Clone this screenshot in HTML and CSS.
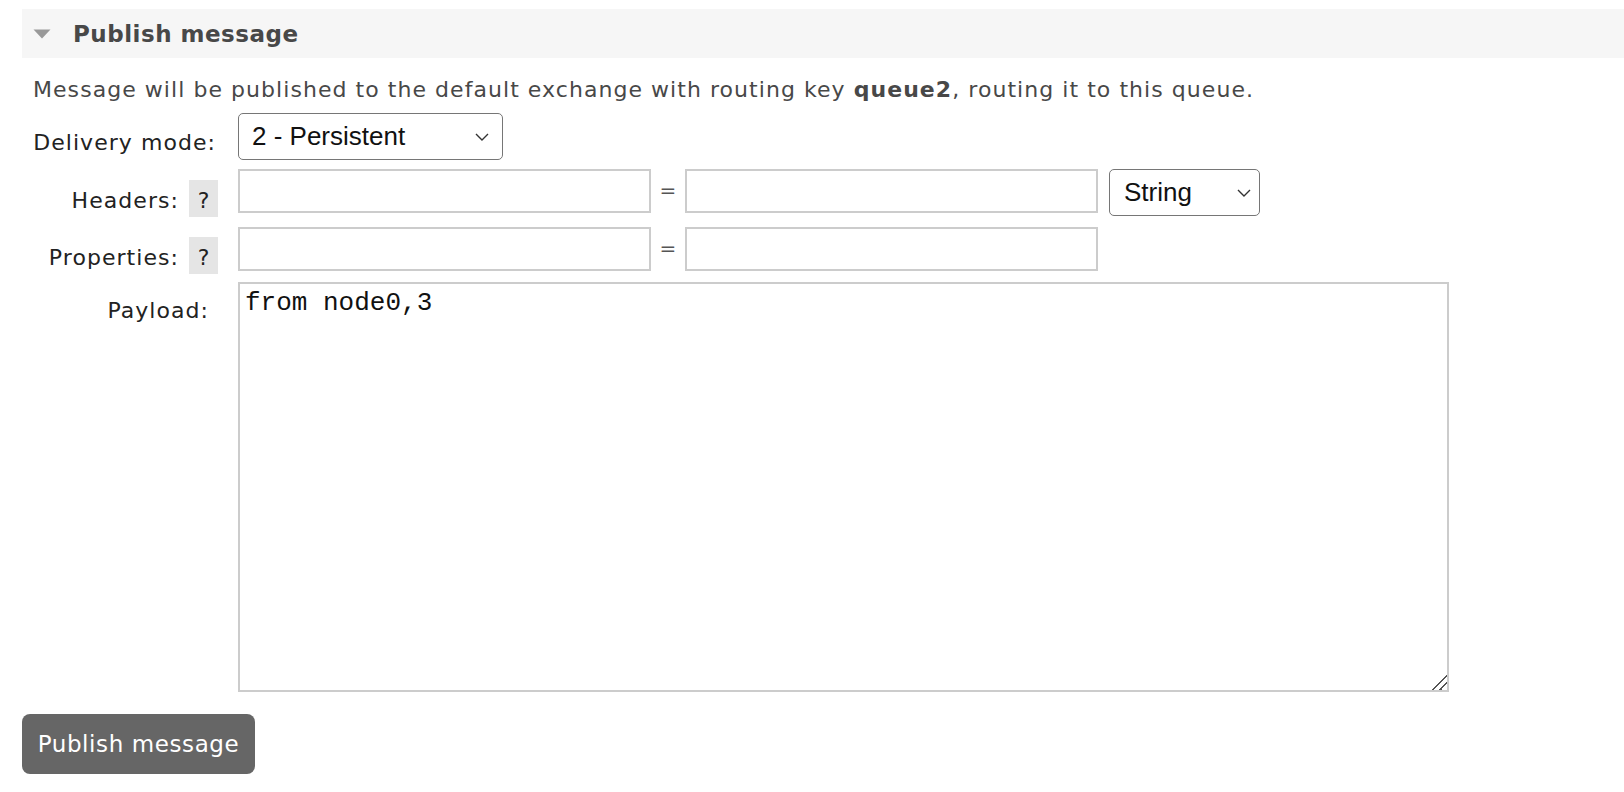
FILE: index.html
```html
<!DOCTYPE html>
<html>
<head>
<meta charset="utf-8">
<link rel="stylesheet" href="styles.css">
</head>
<body>
<div class="section">
  <div class="section-head">
    <svg class="tri" width="18" height="10" viewBox="0 0 18 10"><path d="M0.5 0.5 L17.5 0.5 L9 9.5 Z" fill="#999"/></svg>
    <h2>Publish message</h2>
  </div>
  <div class="section-body">
    <p class="intro">Message will be published to the default exchange with routing key <b>queue2</b>, routing it to this queue.</p>
    <div class="row row-mode">
      <div class="lbl lbl-mode">Delivery mode:</div>
      <div class="sel sel-mode"><span>2 - Persistent</span><svg width="14" height="8" viewBox="0 0 14 8"><path d="M1 1 L7 7 L13 1" fill="none" stroke="#333" stroke-width="1.4"/></svg></div>
    </div>
    <div class="row row-headers">
      <div class="lbl">Headers:<span class="help">?</span></div>
      <div class="field">
        <div class="inp"></div><span class="eq">=</span><div class="inp"></div>
        <div class="sel sel-type"><span>String</span><svg width="14" height="8" viewBox="0 0 14 8"><path d="M1 1 L7 7 L13 1" fill="none" stroke="#333" stroke-width="1.4"/></svg></div>
      </div>
    </div>
    <div class="row row-props">
      <div class="lbl">Properties:<span class="help">?</span></div>
      <div class="field">
        <div class="inp"></div><span class="eq">=</span><div class="inp"></div>
      </div>
    </div>
    <div class="row row-payload">
      <div class="lbl lbl-payload">Payload:</div>
      <textarea class="payload">from node0,3</textarea>
    </div>
  </div>
  <button class="btn">Publish message</button>
</div>
</body>
</html>
```
FILE: styles.css
```css
html, body {
  margin: 0;
  padding: 0;
  background: #fff;
}
body {
  font-family: "DejaVu Sans", Verdana, sans-serif;
  font-size: 22px;
  letter-spacing: 1.05px;
  color: #222;
}
.section {
  margin: 9px 0 0 22px;
}
.section-head {
  height: 49px;
  background: #f6f6f6;
  display: flex;
  align-items: center;
  padding-left: 11px;
}
.tri {
  margin-right: 22px;
  margin-top: 1px;
}
.section-head h2 {
  margin: 0;
  font-size: 23px;
  letter-spacing: 0.5px;
  font-weight: bold;
  color: #484848;
}
.section-body {
  padding-left: 11px;
}
.intro {
  margin: 16px 0 7px 0;
  line-height: 32px;
  color: #484848;
}
.intro b {
  color: #484848;
}
.row {
  display: flex;
  align-items: flex-start;
}
.row-mode { height: 47px; }
.row-headers { margin-top: 9px; height: 47px; }
.row-props { margin-top: 11px; height: 44px; }
.row-payload { margin-top: 11px; }
.lbl {
  width: 185px;
  flex-shrink: 0;
  margin-right: 20px;
  text-align: right;
  line-height: 32px;
  height: 32px;
  padding-top: 14px;
  white-space: nowrap;
}
.lbl-mode {
  padding-right: 2px;
  width: 183px;
}
.lbl-payload {
  padding-top: 13px;
  padding-right: 9px;
  width: 176px;
}
.help {
  display: inline-block;
  width: 29px;
  height: 32px;
  line-height: 32px;
  padding-top: 5px;
  margin-left: 10px;
  background: #e5e5e5;
  text-align: center;
  letter-spacing: 0;
}
.row-headers .lbl {
  padding-top: 11px;
}
.row-props .lbl {
  padding-top: 10px;
}
.sel {
  box-sizing: border-box;
  height: 47px;
  border: 1.5px solid #767676;
  border-radius: 5px;
  background: #fff;
  display: flex;
  align-items: center;
  justify-content: space-between;
  padding: 0 13px 0 13px;
  font-family: "Liberation Sans", Arial, sans-serif;
  font-size: 26px;
  letter-spacing: 0;
  color: #111;
}
.sel-mode {
  width: 265px;
}
.sel-type {
  width: 151px;
  margin-left: 11px;
  padding-left: 14px;
  padding-right: 8px;
}
.field {
  display: flex;
  align-items: flex-start;
}
.inp {
  box-sizing: border-box;
  width: 413px;
  height: 44px;
  border: 2px solid #ccc;
  background: #fff;
}
.eq {
  width: 34px;
  text-align: center;
  line-height: 42px;
  font-size: 20px;
  letter-spacing: 0;
  color: #555;
}
.payload {
  box-sizing: border-box;
  width: 1211px;
  height: 410px;
  border: 2px solid #ccc;
  padding: 4px 5px;
  margin: 0;
  font-family: "Liberation Mono", "Courier New", monospace;
  font-size: 26px;
  letter-spacing: 0;
  color: #111;
  outline: none;
  resize: both;
}
.payload::-webkit-resizer {
  background: linear-gradient(135deg, transparent 0 47%, #555 47% 55%, transparent 55% 72%, #555 72% 80%, transparent 80%);
}
.btn {
  display: block;
  margin-top: 22px;
  width: 233px;
  height: 60px;
  border: 0;
  border-radius: 8px;
  background: #666;
  color: #fff;
  font-family: "DejaVu Sans", Verdana, sans-serif;
  font-size: 23px;
  letter-spacing: 0.6px;
  padding: 0;
}
```
